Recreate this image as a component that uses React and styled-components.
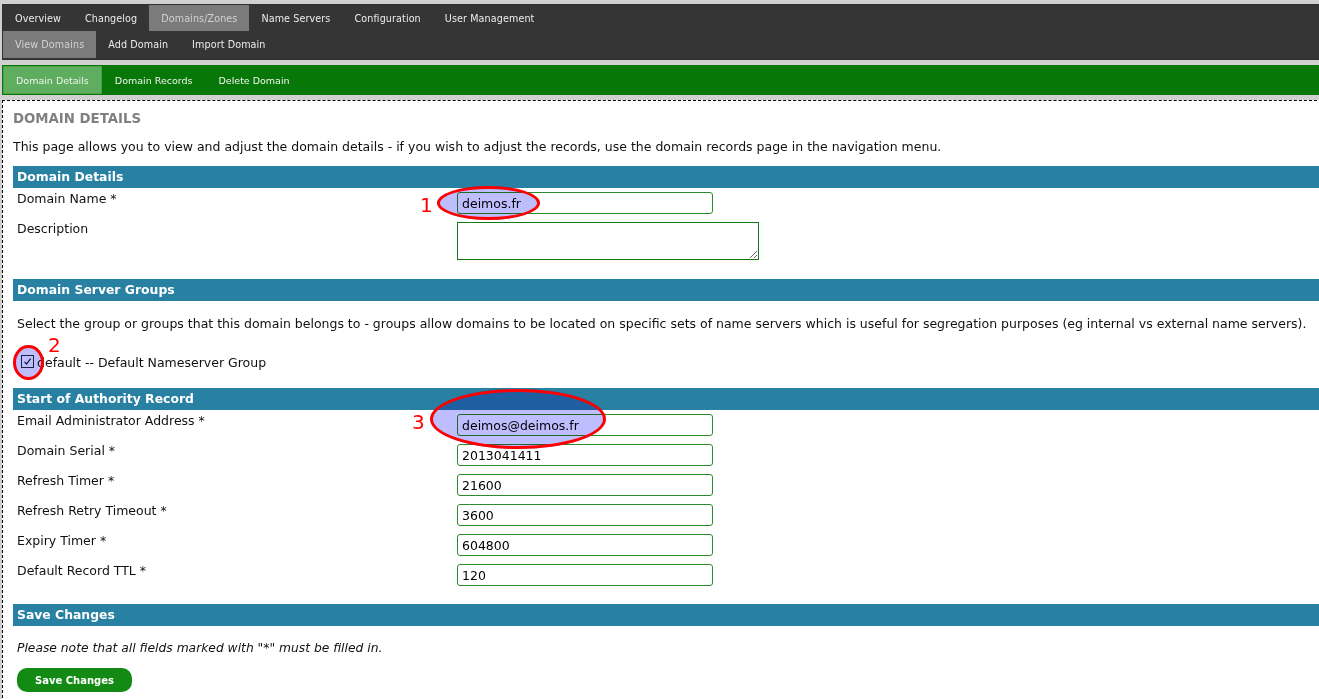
import React from 'react';
import styled, { createGlobalStyle } from 'styled-components';

const Global = createGlobalStyle`
  html, body { margin: 0; padding: 0; overflow: hidden; background: #d0d0d0; }
  body { font-family: "DejaVu Sans", Verdana, sans-serif; color: #000; }
`;

const Page = styled.div`
  position: relative;
  width: 1360px;
  padding: 4px 0 0 2px;
`;

const TopNav = styled.nav`
  background: #353535;
  border: 1px solid #2f2f2f;
  padding-bottom: 1px;
`;

const NavRow = styled.div`
  display: flex;
  height: ${p => p.$h}px;
`;

const NavItem = styled.a`
  display: flex;
  align-items: center;
  padding: 0 12px;
  font-size: 9.6px;
  letter-spacing: 0.1px;
  color: ${p => (p.$active ? '#d2d2d2' : '#ececec')};
  background: ${p => (p.$active ? '#7b7b7b' : 'transparent')};
  cursor: pointer;
`;

const SubNav = styled.nav`
  margin-top: 5px;
  background: #077807;
  padding: 1px;
  display: flex;
  height: 28px;
`;

const SubItem = styled.a`
  display: flex;
  align-items: center;
  padding: 0 12px;
  font-size: 9.5px;
  color: #f2f2f2;
  background: ${p => (p.$active ? '#5fae5f' : 'transparent')};
  border: 1px solid ${p => (p.$active ? '#48a048' : 'transparent')};
  cursor: pointer;
`;

const Content = styled.main`
  margin-top: 5px;
  background: #fff;
  border: 1px dashed #000;
  border-right: none;
  padding: 10px 0 30px 10px;
`;

const Title = styled.h1`
  margin: 0;
  font-size: 13.3px;
  line-height: 16px;
  font-weight: bold;
  color: #808080;
`;

const Text = styled.p`
  margin: ${p => p.$m || '0'};
  font-size: ${p => (p.$italic ? '12.3px' : '12.5px')};
  line-height: 15px;
  font-style: ${p => (p.$italic ? 'italic' : 'normal')};
  padding-left: ${p => p.$indent || 0}px;
  color: #111;
`;

const Section = styled.section`
  margin-bottom: ${p => p.$mb ?? 15}px;
`;

const SectionHead = styled.h2`
  margin: 0;
  height: 22px;
  line-height: 22px;
  padding-left: 4px;
  background: #2880a2;
  color: #fff;
  font-size: 12.4px;
  font-weight: bold;
`;

const FieldRow = styled.div`
  display: grid;
  grid-template-columns: 444px auto;
  align-items: start;
  padding: 4px 0;
`;

const Label = styled.label`
  padding-left: 4px;
  font-size: 12.5px;
  line-height: 14px;
  color: #111;
`;

const Input = styled.input`
  box-sizing: border-box;
  width: 256px;
  height: 22px;
  margin: 0;
  padding: 0 4px;
  border: 1px solid #2a8c2a;
  border-radius: 3px;
  font-family: "DejaVu Sans", Verdana, sans-serif;
  font-size: 12.5px;
  color: #000;
  background: #fff;
  outline: none;
`;

const TextArea = styled.textarea`
  box-sizing: border-box;
  width: 302px;
  height: 38px;
  margin: 0;
  border: 1px solid #137a13;
  font-family: "DejaVu Sans", Verdana, sans-serif;
  font-size: 12px;
  background: #fff;
  outline: none;
`;

const CheckRow = styled.div`
  display: flex;
  align-items: center;
  gap: 3px;
  padding-left: 8px;
  margin-top: 24px;
  margin-bottom: 18px;
`;

const CheckBox = styled.span`
  box-sizing: border-box;
  width: 13px;
  height: 13px;
  border: 1px solid #2a2a40;
  background: #fff;
  display: flex;
  align-items: center;
  justify-content: center;
  margin-top: -3px;
`;

const CheckText = styled.span`
  font-size: 12.5px;
  line-height: 15px;
  color: #111;
`;

const SaveButton = styled.button`
  margin: 12px 0 0 4px;
  height: 24px;
  padding: 0 18px;
  border: none;
  border-radius: 10px;
  background: #138a13;
  color: #fff;
  font-family: "DejaVu Sans", Verdana, sans-serif;
  font-size: 10px;
  font-weight: bold;
  cursor: pointer;
`;

const Mark = styled.div`
  position: absolute;
  left: ${p => p.$x}px;
  top: ${p => p.$y}px;
  width: ${p => p.$w}px;
  height: ${p => p.$h}px;
  border-radius: 50%;
  box-sizing: border-box;
  pointer-events: none;
`;

const MarkFill = styled(Mark)`
  background: #bebeff;
  mix-blend-mode: multiply;
`;

const MarkRing = styled(Mark)`
  border: 3px solid #f00;
`;

const MarkNum = styled.span`
  position: absolute;
  left: ${p => p.$x}px;
  top: ${p => p.$y}px;
  color: #f00;
  font-size: 20px;
  line-height: 20px;
  pointer-events: none;
`;

const Annotation = ({ x, y, w, h, n, nx, ny }) => (
  <>
    <MarkFill $x={x} $y={y} $w={w} $h={h} />
    <MarkRing $x={x} $y={y} $w={w} $h={h} />
    <MarkNum $x={nx} $y={ny}>{n}</MarkNum>
  </>
);

const topItems = ['Overview', 'Changelog', 'Domains/Zones', 'Name Servers', 'Configuration', 'User Management'];
const secondItems = ['View Domains', 'Add Domain', 'Import Domain'];
const greenItems = ['Domain Details', 'Domain Records', 'Delete Domain'];

const soaFields = [
  ['Email Administrator Address *', 'deimos@deimos.fr'],
  ['Domain Serial *', '2013041411'],
  ['Refresh Timer *', '21600'],
  ['Refresh Retry Timeout *', '3600'],
  ['Expiry Timer *', '604800'],
  ['Default Record TTL *', '120'],
];

export default function App() {
  return (
    <Page>
      <Global />
      <TopNav>
        <NavRow $h={26}>
          {topItems.map(t => (
            <NavItem key={t} $active={t === 'Domains/Zones'}>{t}</NavItem>
          ))}
        </NavRow>
        <NavRow $h={27}>
          {secondItems.map(t => (
            <NavItem key={t} $active={t === 'View Domains'}>{t}</NavItem>
          ))}
        </NavRow>
      </TopNav>
      <SubNav>
        {greenItems.map(t => (
          <SubItem key={t} $active={t === 'Domain Details'}>{t}</SubItem>
        ))}
      </SubNav>
      <Content>
        <Title>DOMAIN DETAILS</Title>
        <Text $m="12px 0 12px">
          This page allows you to view and adjust the domain details - if you wish to adjust the records, use the domain records page in the navigation menu.
        </Text>

        <Section>
          <SectionHead>Domain Details</SectionHead>
          <FieldRow>
            <Label>Domain Name *</Label>
            <Input defaultValue="deimos.fr" />
          </FieldRow>
          <FieldRow>
            <Label>Description</Label>
            <TextArea defaultValue="" />
          </FieldRow>
        </Section>

        <Section>
          <SectionHead>Domain Server Groups</SectionHead>
          <Text $m="15px 0 0" $indent={4}>
            Select the group or groups that this domain belongs to - groups allow domains to be located on specific sets of name servers which is useful for segregation purposes (eg internal vs external name servers).
          </Text>
          <CheckRow>
            <CheckBox>
              <svg width="9" height="9" viewBox="0 0 9 9">
                <polyline points="1.5,4.8 3.6,7 7.6,1.6" fill="none" stroke="#1a1a30" strokeWidth="1.2" />
              </svg>
            </CheckBox>
            <CheckText>default -- Default Nameserver Group</CheckText>
          </CheckRow>
        </Section>

        <Section $mb={14}>
          <SectionHead>Start of Authority Record</SectionHead>
          {soaFields.map(([label, value]) => (
            <FieldRow key={label}>
              <Label>{label}</Label>
              <Input defaultValue={value} />
            </FieldRow>
          ))}
        </Section>

        <Section>
          <SectionHead>Save Changes</SectionHead>
          <Text $m="15px 0 0" $indent={4} $italic>
            Please note that all fields marked with "*" must be filled in.
          </Text>
          <SaveButton>Save Changes</SaveButton>
        </Section>
      </Content>

      <Annotation x={437} y={186} w={103} h={34} n="1" nx={420} ny={195} />
      <Annotation x={13} y={345} w={31} h={35} n="2" nx={48} ny={335} />
      <Annotation x={430} y={389} w={176} h={60} n="3" nx={412} ny={412} />
    </Page>
  );
}
